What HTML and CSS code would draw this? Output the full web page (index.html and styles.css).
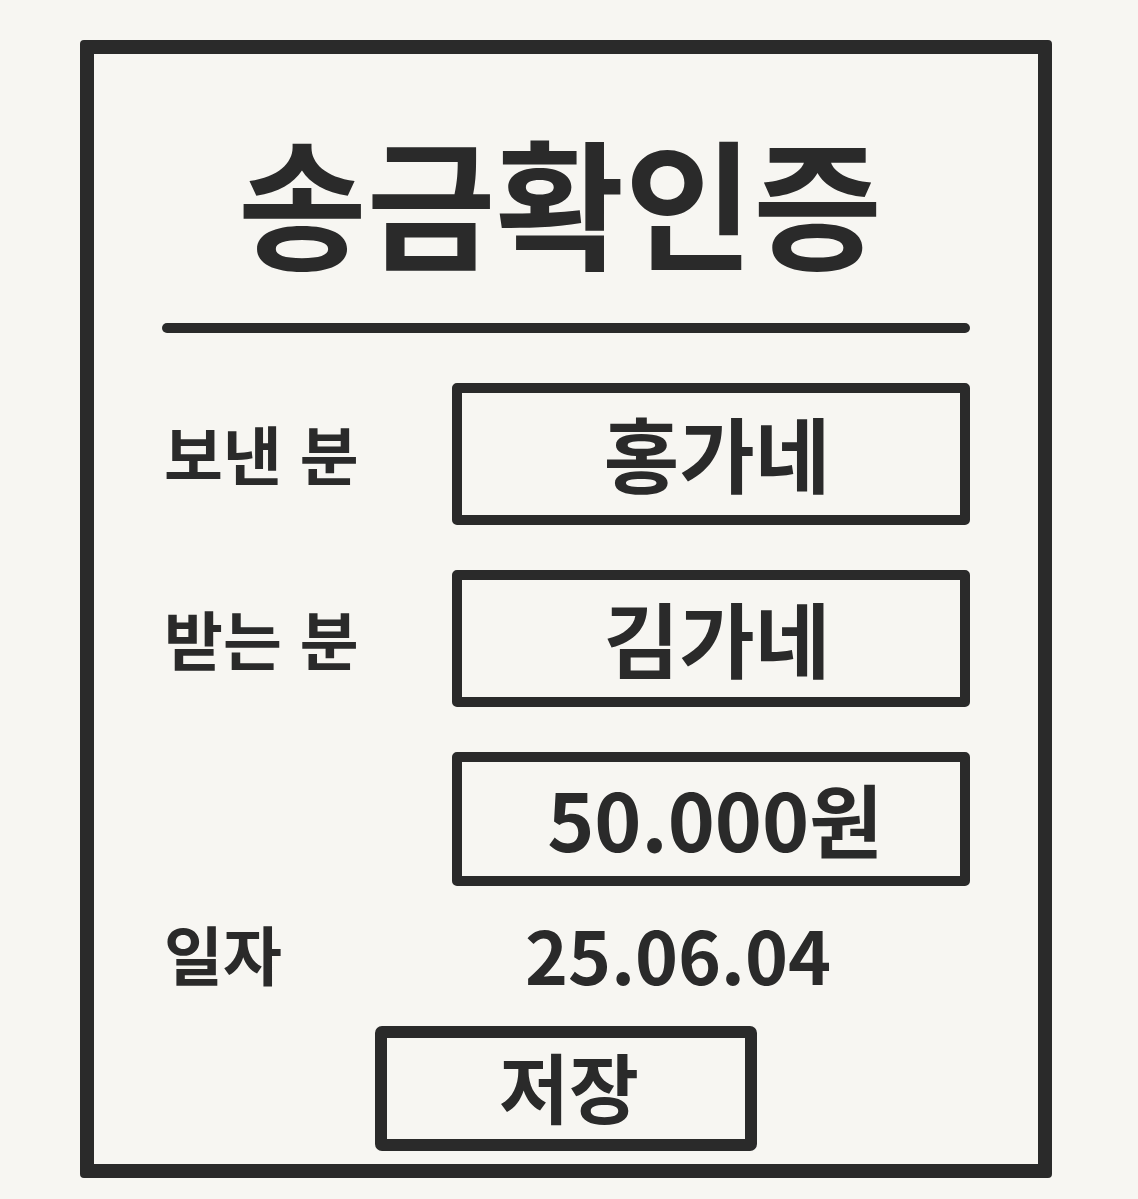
FILE: index.html
```html
<!DOCTYPE html>
<html lang="ko">
  <head>
    <meta charset="UTF-8" />
    <meta name="viewport" content="width=device-width, initial-scale=1.0" />
    <title>송금확인증</title>
    <link rel="stylesheet" href="styles.css">
  </head>
  <body>
    <main class="receipt">
      <h1 class="title">송금확인증</h1>
      <div class="divider"></div>

      <div class="fields">
        <div class="row">
          <span class="label">보낸 분</span>
          <div class="field sender">홍가네</div>
        </div>
        <div class="row">
          <span class="label">받는 분</span>
          <div class="field receiver">김가네</div>
        </div>
        <div class="row">
          <span class="label"></span>
          <div class="field amount">50.000원</div>
        </div>
        <div class="row date-row">
          <span class="label">일자</span>
          <span class="date">25.06.04</span>
        </div>
      </div>

      <button class="save">저장</button>
    </main>
  </body>
</html>
```

FILE: styles.css
```css
body {
  margin: 0;
  background-color: #f7f6f2;
  color: #2a2a2a;
  font-family: 'Noto Sans CJK KR', 'Noto Sans', sans-serif;
  font-weight: 700;
}
.receipt {
  box-sizing: border-box;
  width: 972px;
  height: 1138px;
  margin: 40px 0 0 80px;
  border: 14px solid #2a2a2a;
  border-radius: 4px;
  display: flex;
  flex-direction: column;
  align-items: center;
}
.title {
  margin: 74px 0 0 -12px;
  font-size: 140px;
  line-height: 1;
  font-weight: 700;
}
.divider {
  align-self: stretch;
  height: 10px;
  margin: 55px 68px 0;
  border-radius: 5px;
  background-color: #2a2a2a;
}
.fields {
  align-self: stretch;
  margin: 50px 68px 0 70px;
  display: flex;
  flex-direction: column;
  gap: 45px;
}
.row {
  display: grid;
  grid-template-columns: 288px 1fr;
  align-items: center;
}
.label {
  margin-top: -4px;
  font-size: 64px;
  line-height: 1;
}
.field {
  box-sizing: border-box;
  height: 142px;
  padding: 0 0 4px 12px;
  border: 10px solid #2a2a2a;
  border-radius: 5px;
  display: flex;
  align-items: center;
  justify-content: center;
  font-size: 82px;
  line-height: 1;
}
.receiver {
  height: 137px;
}
.amount {
  height: 134px;
  padding-left: 8px;
  font-size: 80px;
}
.date-row {
  margin-top: -14px;
}
.date {
  padding-left: 73px;
  font-size: 73px;
  line-height: 1;
}
.save {
  box-sizing: border-box;
  width: 382px;
  height: 125px;
  margin-top: 36px;
  padding: 0 0 8px 6px;
  border: 12px solid #2a2a2a;
  border-radius: 7px;
  background: transparent;
  color: #2a2a2a;
  font-family: inherit;
  font-size: 76px;
  font-weight: 700;
  line-height: 1;
}
```
